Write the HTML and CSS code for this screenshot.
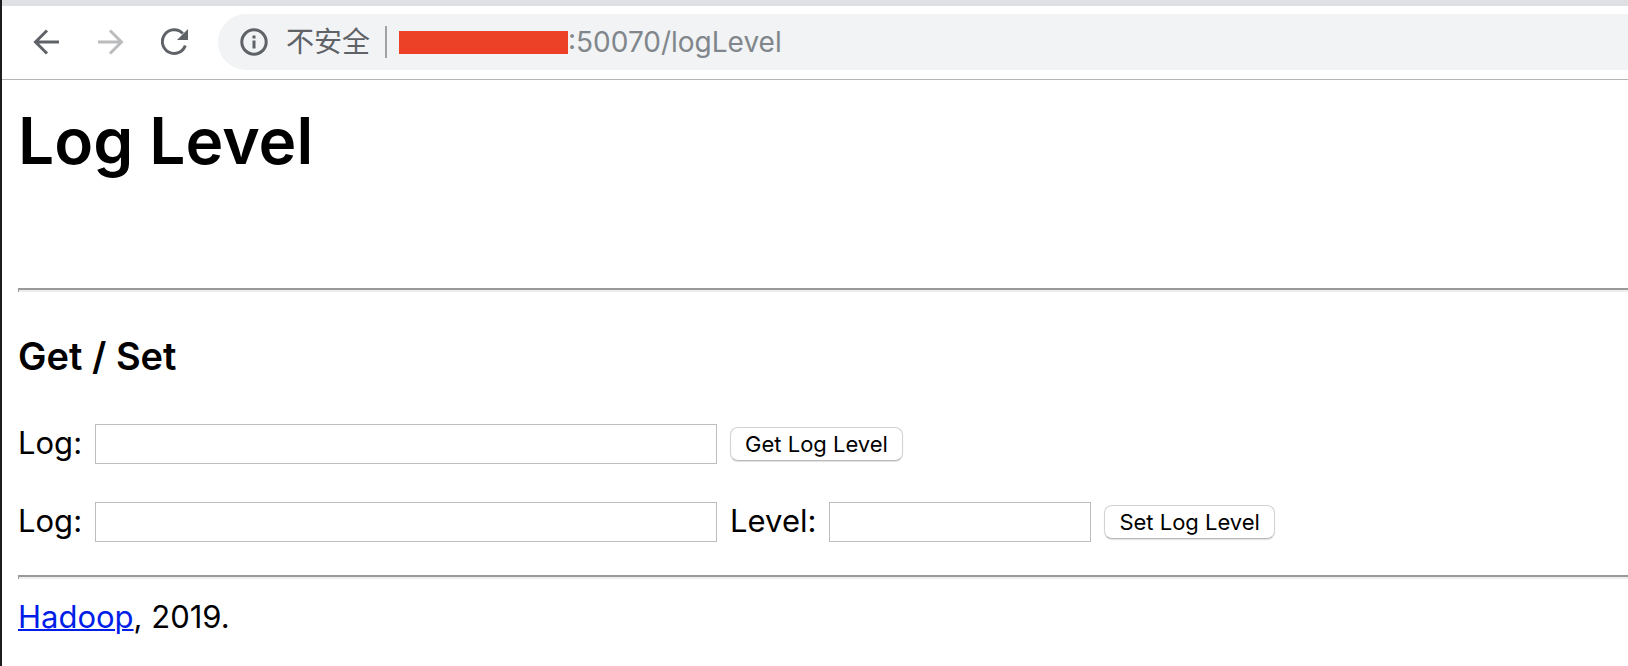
FILE: index.html
```html
<!DOCTYPE html>
<html lang="zh-CN">
<head>
<meta charset="utf-8">
<title>Log Level</title>
<link rel="stylesheet" href="styles.css">
</head>
<body>
<div class="window">
  <header class="toolbar">
    <nav class="nav">
      <button class="nav-button" type="button" aria-label="Back">
        <svg class="icon" viewBox="0 0 28 28"><path d="M26 14H2.500M14 2.500L2.500 14L14 25.500"/></svg>
      </button>
      <button class="nav-button" type="button" aria-label="Forward" disabled>
        <svg class="icon" viewBox="0 0 28 28"><path d="M1 14H24.500M13 2.500L24.500 14L13 25.500"/></svg>
      </button>
      <button class="nav-button" type="button" aria-label="Reload">
        <svg class="icon" viewBox="0 0 28 28"><path d="M21.800 5.600A11.800 11.800 0 1 0 24.300 17.500"/><path class="solid" d="M27 1V12H16Z"/></svg>
      </button>
    </nav>
    <div class="address">
      <svg class="icon info" viewBox="0 0 28 28"><circle cx="14" cy="14" r="12.200"/><path class="solid" d="M12.500 7.500h3v3h-3zM12.500 12.500h3v8h-3z"/></svg>
      <span class="security">不安全</span>
      <span class="divider"></span>
      <span class="redacted"></span>
      <span class="url">:50070/logLevel</span>
    </div>
  </header>
  <main class="page">
    <h1 class="title">Log Level</h1>
    <hr class="rule">
    <h3 class="subtitle">Get / Set</h3>
    <form class="row">
      <label for="get-log">Log:</label>
      <input class="field log" id="get-log" type="text">
      <button class="submit" type="button">Get Log Level</button>
    </form>
    <form class="row">
      <label for="set-log">Log:</label>
      <input class="field log" id="set-log" type="text">
      <label for="set-level">Level:</label>
      <input class="field level" id="set-level" type="text">
      <button class="submit" type="button">Set Log Level</button>
    </form>
    <hr class="rule">
    <footer class="footer"><a href="#">Hadoop</a>, 2019.</footer>
  </main>
</div>
</body>
</html>
```

FILE: styles.css
```css
* { box-sizing: border-box; }

body {
  margin: 0;
  background: #fff;
  color: #000;
  font-family: Inter, "Noto Sans CJK SC", sans-serif;
  font-size: 31px;
  line-height: 40px;
}

.window {
  min-height: 100vh;
  border-left: 2px solid #1c1d1f;
}

.toolbar {
  display: flex;
  align-items: center;
  gap: 29px;
  padding: 8px 0 9px 31px;
  border-top: 6px solid #dee0e4;
  border-bottom: 1px solid #b4b4b5;
}

.nav {
  display: flex;
  gap: 36px;
}

.nav-button {
  display: flex;
  padding: 0;
  border: 0;
  background: none;
  color: #5f6368;
}

.nav-button:disabled { color: #bbbcbe; }

.icon {
  width: 28px;
  height: 28px;
  fill: none;
  stroke: currentColor;
  stroke-width: 3;
}

.icon .solid {
  fill: currentColor;
  stroke: none;
}

.address {
  display: flex;
  flex: 1;
  align-items: center;
  height: 56px;
  padding-left: 22px;
  border-radius: 28px 0 0 28px;
  background: #f1f3f4;
  color: #5f6368;
  font-size: 28px;
}

.security { margin: 0 15px 0 18px; }

.divider {
  width: 2px;
  height: 32px;
  background: #a0a2a5;
}

.redacted {
  width: 169px;
  height: 23px;
  margin-left: 12px;
  background: #ec4027;
}

.url { color: #80868b; }

.page { padding: 21px 0 0 16px; }

.title {
  margin: 0 0 107px;
  font-size: 64px;
  font-weight: 600;
  line-height: 80px;
}

.rule {
  height: 4px;
  margin: 0;
  border: 0;
  border-top: 2px solid #999;
  border-left: 1px solid #999;
  background: #eee;
}

.subtitle {
  margin: 44px 0 48px;
  font-size: 38px;
  font-weight: 600;
}

.row {
  display: flex;
  align-items: center;
  gap: 13px;
  margin-bottom: 38px;
}

.row label { padding-bottom: 3px; line-height: 37px; }

.row + .rule { margin-top: -5px; }

.field {
  height: 40px;
  padding: 0 6px;
  border: 1px solid #bdbdbd;
  background: #fff;
  font: inherit;
}

.log { width: 622px; }

.level { width: 262px; }

.submit {
  height: 34px;
  padding: 0 14px;
  border: 1px solid #d2d2d2;
  border-bottom-color: #b8b8b8;
  border-radius: 8px;
  background: #fff;
  box-shadow: 0 1px 1px #e2e2e2;
  color: #000;
  font-family: inherit;
  font-size: 22px;
  line-height: 30px;
}

.footer { margin-top: 18px; }

.footer a {
  color: #001ee8;
  text-decoration-thickness: 2px;
}
```
